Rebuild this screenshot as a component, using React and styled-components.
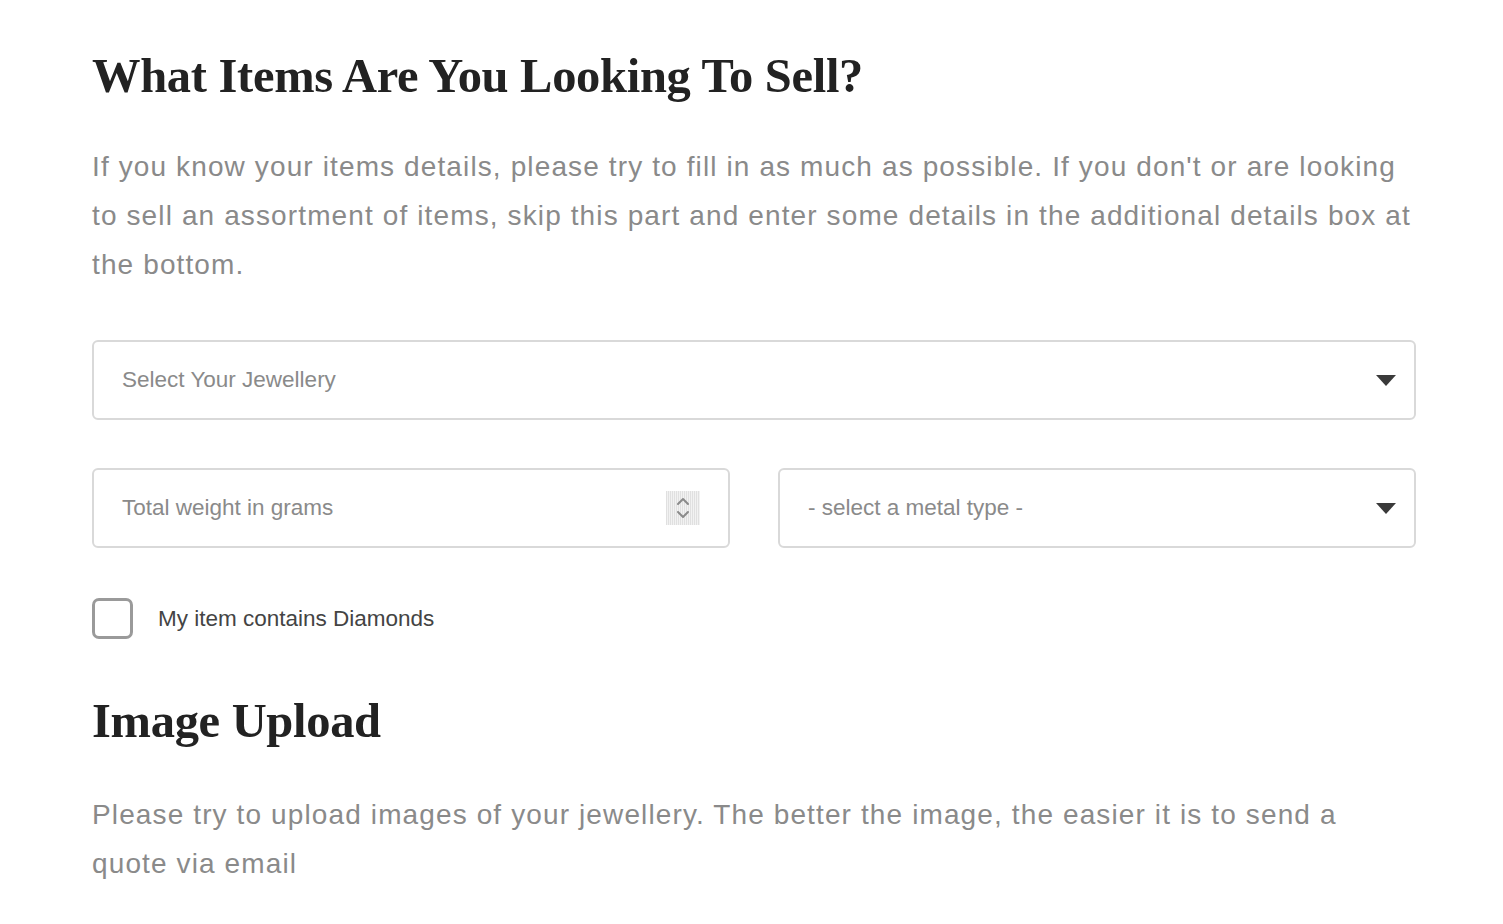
import styled, { createGlobalStyle } from "styled-components";

const GlobalStyle = createGlobalStyle`
  body {
    margin: 0;
    background: #fff;
  }
`;

const Page = styled.div`
  padding: 42px 87px 0 92px;
  box-sizing: border-box;
  width: 1503px;
`;

const Heading = styled.h2`
  margin: 0;
  font-family: "Liberation Serif", "DejaVu Serif", serif;
  font-weight: 700;
  font-size: 48.5px;
  line-height: 68px;
  color: #222;
  letter-spacing: -0.3px;
`;

const Lead = styled.p`
  margin: ${(p) => p.$top || 0}px 0 0;
  font-family: "Liberation Sans", Arial, sans-serif;
  font-weight: 400;
  font-size: 28px;
  letter-spacing: 1.12px;
  line-height: 49px;
  color: #8a8a8a;
`;

const Field = styled.div`
  height: 80px;
  box-sizing: border-box;
  border: 2px solid #d9d9d9;
  border-radius: 6px;
  display: flex;
  align-items: center;
  justify-content: space-between;
  padding: 0 28px;
  font-family: "Liberation Sans", Arial, sans-serif;
  font-size: 22.5px;
  color: #8a8a8a;
`;

const Row = styled.div`
  display: grid;
  grid-template-columns: 1fr 1fr;
  gap: 48px;
  margin-top: 48px;
`;

const Form = styled.div`
  margin-top: 51px;
`;

const Caret = styled.span`
  width: 0;
  height: 0;
  border-left: 10px solid transparent;
  border-right: 10px solid transparent;
  border-top: 11px solid #3a3a3a;
  margin-right: -10px;
`;

const Spinner = styled.span`
  width: 34px;
  height: 34px;
  background: repeating-linear-gradient(90deg, #e0e0e0 0 1px, #f2f2f2 1px 2px);
  display: flex;
  align-items: center;
  justify-content: center;
`;

const CheckRow = styled.label`
  display: flex;
  align-items: center;
  gap: 25px;
  margin-top: 50px;
  font-family: "Liberation Sans", Arial, sans-serif;
  font-size: 22.5px;
  color: #444;
`;

const Box = styled.span`
  width: 41px;
  height: 41px;
  box-sizing: border-box;
  border: 3px solid #9a9a9a;
  border-radius: 7px;
`;

const SubHeading = styled(Heading)`
  margin-top: 48px;
`;

export default function App() {
  return (
    <>
      <GlobalStyle />
      <Page>
        <Heading>What Items Are You Looking To Sell?</Heading>
        <Lead $top={32}>
          If you know your items details, please try to fill in as much as possible. If you
          don't or are looking to sell an assortment of items, skip this part and enter some
          details in the additional details box at the bottom.
        </Lead>
        <Form>
          <Field>
            Select Your Jewellery
            <Caret />
          </Field>
          <Row>
            <Field>
              Total weight in grams
              <Spinner>
                <svg width="18" height="28" viewBox="0 0 18 28" fill="none" stroke="#8a8a8a" strokeWidth="2" strokeLinecap="round" strokeLinejoin="round">
                  <path d="M4 10l5-5 5 5" />
                  <path d="M4 18l5 5 5-5" />
                </svg>
              </Spinner>
            </Field>
            <Field>
              - select a metal type -
              <Caret />
            </Field>
          </Row>
          <CheckRow>
            <Box />
            My item contains Diamonds
          </CheckRow>
        </Form>
        <SubHeading>Image Upload</SubHeading>
        <Lead $top={35}>
          Please try to upload images of your jewellery. The better the image, the easier it
          is to send a quote via email
        </Lead>
      </Page>
    </>
  );
}
